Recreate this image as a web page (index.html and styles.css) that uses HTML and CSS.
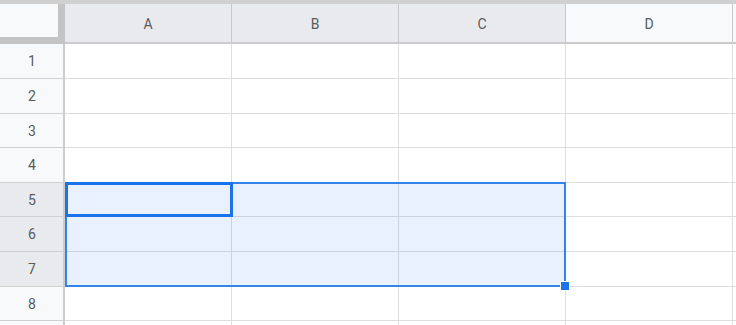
FILE: index.html
```html
<!DOCTYPE html>
<html>
<head>
<meta charset="utf-8">
<link rel="stylesheet" href="styles.css">
</head>
<body>
<div class="sheet">
  <div class="topstrip"></div>
  <div class="grid">
    <div class="corner"><div class="corner-inner"></div></div>
    <div class="colhead sel">A</div>
    <div class="colhead sel">B</div>
    <div class="colhead sel">C</div>
    <div class="colhead">D</div>
    <div class="colhead edge"></div>

    <div class="rowhead">1</div><div class="cell"></div><div class="cell"></div><div class="cell"></div><div class="cell"></div><div class="cell edge"></div>
    <div class="rowhead">2</div><div class="cell"></div><div class="cell"></div><div class="cell"></div><div class="cell"></div><div class="cell edge"></div>
    <div class="rowhead">3</div><div class="cell"></div><div class="cell"></div><div class="cell"></div><div class="cell"></div><div class="cell edge"></div>
    <div class="rowhead">4</div><div class="cell"></div><div class="cell"></div><div class="cell"></div><div class="cell"></div><div class="cell edge"></div>
    <div class="rowhead sel">5</div><div class="cell"></div><div class="cell"></div><div class="cell"></div><div class="cell"></div><div class="cell edge"></div>
    <div class="rowhead sel">6</div><div class="cell"></div><div class="cell"></div><div class="cell"></div><div class="cell"></div><div class="cell edge"></div>
    <div class="rowhead sel">7</div><div class="cell"></div><div class="cell"></div><div class="cell"></div><div class="cell"></div><div class="cell edge"></div>
    <div class="rowhead">8</div><div class="cell"></div><div class="cell"></div><div class="cell"></div><div class="cell"></div><div class="cell edge"></div>
    <div class="rowhead"></div><div class="cell"></div><div class="cell"></div><div class="cell"></div><div class="cell"></div><div class="cell edge"></div>
  </div>
  <div class="selection"></div>
  <div class="active"></div>
  <div class="handle"></div>
</div>
</body>
</html>
```

FILE: styles.css
```css
html, body {
  margin: 0;
  padding: 0;
  background: #ffffff;
  overflow: hidden;
}
body {
  font-family: Roboto, "Liberation Sans", Arial, sans-serif;
}
.sheet {
  position: relative;
  width: 736px;
  height: 325px;
  overflow: hidden;
}
.topstrip {
  height: 4px;
  background: #d0d0d0;
}
.grid {
  display: grid;
  grid-template-columns: 65px 167px 167px 167px 167px 20px;
  grid-template-rows: 40px 35px 35px 34px 35px 34px 35px 35px 34px 30px;
}
.grid > div {
  box-sizing: border-box;
  display: flex;
  align-items: center;
  justify-content: center;
  font-size: 14px;
  color: #575b61;
}
.corner {
  background: #c4c4c4;
  padding: 0 7px 7px 0;
  align-items: stretch !important;
  justify-content: stretch !important;
}
.corner-inner {
  flex: 1;
  background: #f8f9fa;
}
.colhead {
  background: #f8f9fa;
  border-right: 1px solid #c7c7c7;
  border-bottom: 2px solid #cccccc;
  padding-top: 2px;
}
.rowhead {
  background: #f8f9fa;
  border-right: 2px solid #cccccc;
  border-bottom: 1px solid #d0d0d0;
  padding-left: 1px;
}
.colhead.sel, .rowhead.sel {
  background: #e8eaed;
}
.cell {
  border-right: 1px solid #dedede;
  border-bottom: 1px solid #dedede;
}
.grid > .edge {
  border-right: none;
}
.selection {
  position: absolute;
  left: 65px;
  top: 182px;
  width: 501px;
  height: 105px;
  box-sizing: border-box;
  border: 2px solid #3583ea;
  background: rgba(26, 115, 232, 0.1);
}
.active {
  position: absolute;
  left: 65px;
  top: 182px;
  width: 168px;
  height: 35px;
  box-sizing: border-box;
  border: 3px solid #1a73e8;
}
.handle {
  position: absolute;
  left: 560px;
  top: 281px;
  width: 10px;
  height: 10px;
  box-sizing: border-box;
  background: #1a73e8;
  border: 1px solid #ffffff;
}
```
